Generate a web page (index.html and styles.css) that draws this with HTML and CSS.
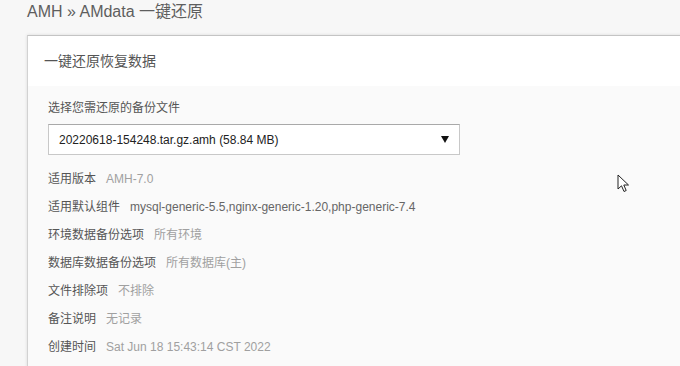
FILE: index.html
```html
<html>
<head>
    <title>AMH » AMdata 一键还原</title>
    <meta charset="UTF-8">
    <link rel="stylesheet" href="styles.css">
</head>
<body>
    <div class="page">
        <div class="crumb">AMH » AMdata 一键还原</div>

        <div class="panel">
            <div class="panel-header">一键还原恢复数据</div>

            <div class="panel-body">
                <label class="field-label">选择您需还原的备份文件</label>
                <select class="backup-select" name="backup_file">
                    <option>20220618-154248.tar.gz.amh (58.84 MB)</option>
                </select>

                <!-- 备份文件信息 -->
                <ul class="info-list">
                    <li><span class="info-key">适用版本</span><span class="info-val">AMH-7.0</span></li>
                    <li><span class="info-key">适用默认组件</span><span class="info-val dark">mysql-generic-5.5,nginx-generic-1.20,php-generic-7.4</span></li>
                    <li><span class="info-key">环境数据备份选项</span><span class="info-val">所有环境</span></li>
                    <li><span class="info-key">数据库数据备份选项</span><span class="info-val">所有数据库(主)</span></li>
                    <li><span class="info-key">文件排除项</span><span class="info-val">不排除</span></li>
                    <li><span class="info-key">备注说明</span><span class="info-val">无记录</span></li>
                    <li><span class="info-key">创建时间</span><span class="info-val">Sat Jun 18 15:43:14 CST 2022</span></li>
                </ul>
            </div>
        </div>
    </div>

    <svg class="cursor" width="13" height="20" viewBox="0 0 13 20">
        <path d="M1 1 L1 15 L4.5 11.8 L7 17.5 L9.2 16.5 L6.8 11 L11.5 11 Z" fill="#fff" stroke="#222" stroke-width="1" stroke-linejoin="miter"/>
    </svg>
</body>
</html>
```

FILE: styles.css
```css
body {
    margin: 0;
    background: #f7f7f7;
    font-family: 'Liberation Sans', Arial, 'Noto Sans CJK SC', sans-serif;
    color: #555;
    overflow: hidden;
}

.page {
    padding-left: 27px;
}

.crumb {
    font-size: 16px;
    line-height: 24px;
    color: #5e5e5e;
    margin-bottom: 11px;
}

.panel {
    margin-right: -20px;
    background: #fafafa;
    border-top: 1px solid #c4c4c4;
    border-left: 1px solid #d2d2d2;
    box-shadow: 0 0 3px rgba(0, 0, 0, 0.12);
    min-height: 340px;
}

.panel-header {
    background: #fff;
    height: 50px;
    line-height: 50px;
    padding-left: 16px;
    font-size: 14px;
    color: #555;
}

.panel-body {
    padding: 14px 20px;
}

.field-label {
    display: block;
    font-size: 12px;
    line-height: 16px;
    color: #555;
    margin-bottom: 8px;
}

.backup-select {
    display: block;
    width: 412px;
    height: 31px;
    padding: 0 10px;
    border: 1px solid #c8c8c8;
    border-top-color: #a9a9a9;
    border-radius: 0;
    font-family: inherit;
    font-size: 12px;
    color: #222;
    background: white;
    appearance: none;
    background-image: url("data:image/svg+xml;charset=UTF-8,%3csvg xmlns='http://www.w3.org/2000/svg' width='8' height='7' viewBox='0 0 8 7'%3e%3cpolygon points='0 0 8 0 4 7' fill='%23111'/%3e%3c/svg%3e");
    background-repeat: no-repeat;
    background-position: right 10px center;
}

.info-list {
    list-style: none;
    margin: 10px 0 0 0;
    padding: 0;
}

.info-list li {
    font-size: 12px;
    line-height: 28px;
}

.info-key {
    color: #555;
    margin-right: 10px;
}

.info-val {
    color: #a0a0a0;
}

.info-val.dark {
    color: #666;
}

.cursor {
    position: absolute;
    left: 617px;
    top: 174px;
}
```
